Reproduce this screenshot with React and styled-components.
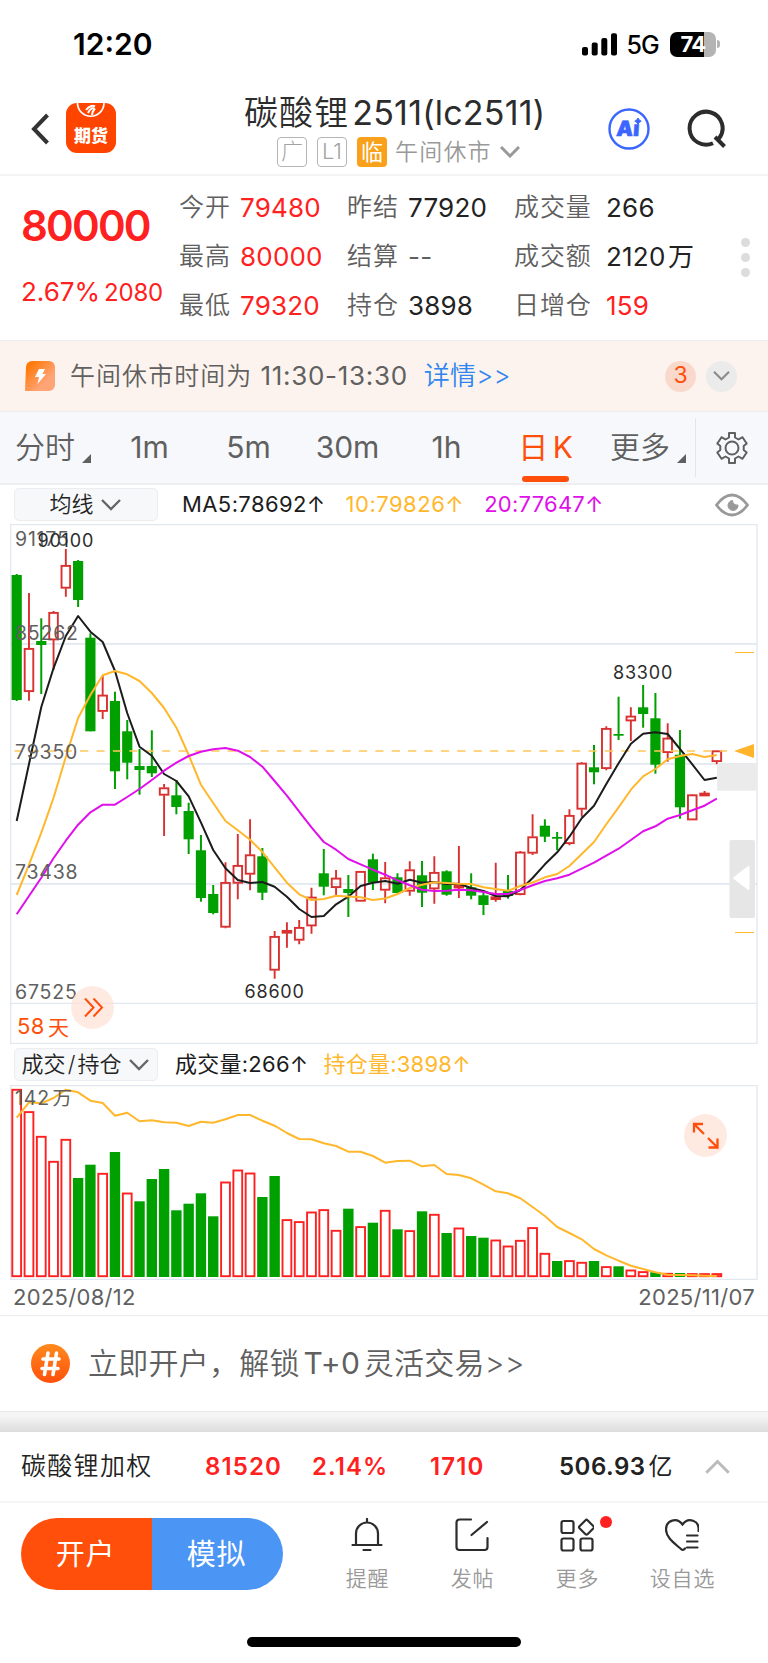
import React from 'react';
import styled, { createGlobalStyle } from 'styled-components';

const colors = {
  up: '#ff2020',
  candleUp: '#d93030',
  down: '#00a000',
  brand: '#ff4f0a',
  ma5: '#1c1c1c',
  ma10: '#ffb72c',
  ma20: '#e010ea',
  grid: '#e2e8ef',
  text: '#222222',
  label: '#606060',
  muted: '#999999',
};

const GlobalStyle = createGlobalStyle`
  * {
    box-sizing: border-box;
  }

  body {
    margin: 0;
    background: #fff;
    font-family: Inter, 'Noto Sans CJK SC', sans-serif;
    font-weight: 400;
    line-height: 1.21;
    color: ${colors.text};
  }

  svg {
    display: block;
    flex: none;
  }
`;

const Page = styled.div`
  width: 768px;
  height: 1663px;
  display: flex;
  flex-direction: column;
  overflow: hidden;
  white-space: nowrap;
`;

/* status bar */

const StatusBar = styled.div`
  height: 88px;
  padding: 0 48px 0 73px;
  display: flex;
  align-items: center;
  justify-content: space-between;
  color: #000;
`;

const Clock = styled.span`
  font-size: 30px;
  font-weight: 600;
`;

const StatusRight = styled.div`
  display: flex;
  align-items: center;
`;

const Network = styled.span`
  margin: 2px 11px 0 9px;
  font-size: 25px;
  font-weight: 500;
  letter-spacing: -0.8px;
`;

const Battery = styled.div`
  width: 46px;
  height: 25px;
  border-radius: 7px;
  background: linear-gradient(90deg, #000 0 34px, #b4b4b4 34px);
  color: #fff;
  font-size: 22px;
  font-weight: 700;
  line-height: 25px;
  text-align: center;
  letter-spacing: -0.8px;
`;

const BatteryTip = styled.span`
  width: 3px;
  height: 8px;
  margin-left: 1px;
  border-radius: 0 3px 3px 0;
  background: #b4b4b4;
`;

/* header */

const Header = styled.header`
  height: 88px;
  padding: 0 42px 0 31px;
  display: flex;
  align-items: flex-start;
  border-bottom: 2px solid #f4f4f4;
`;

const BackIcon = styled.svg`
  margin-top: 25px;
`;

const AppLogo = styled.div`
  position: relative;
  width: 50px;
  height: 50px;
  margin: 15px 0 0 17px;
  border-radius: 11px;
  background: #ff4400;
  overflow: hidden;
  color: #fff;
  font-size: 17px;
  font-weight: 900;
  line-height: 66px;
  text-align: center;

  svg {
    position: absolute;
    top: 0;
    left: 10px;
  }
`;

const TitleBlock = styled.div`
  width: 302px;
  margin: 1px 0 0 128px;
`;

const Title = styled.h1`
  margin: 0;
  height: 48px;
  display: flex;
  align-items: center;
  gap: 3px;
  font-size: 34px;
  line-height: 46px;
  font-weight: 400;
  color: #2c2c2c;
`;

const TitleName = styled.span`
  font-weight: 350;
  letter-spacing: 1.1px;
`;

const TitleCode = styled.span`
  letter-spacing: 0.2px;
`;

const TagRow = styled.div`
  display: flex;
  align-items: center;
  margin-left: 33px;
`;

const Tag = styled.span`
  width: 30px;
  height: 30px;
  margin-right: ${({ $filled }) => ($filled ? 8 : 10)}px;
  border-radius: 4px;
  border: ${({ $filled }) => ($filled ? 'none' : '1.5px solid #b5b5b5')};
  background: ${({ $filled }) => ($filled ? '#f9a11b' : '#fff')};
  color: ${({ $filled }) => ($filled ? '#fff' : '#a3a3a3')};
  font-size: 22px;
  line-height: ${({ $filled }) => ($filled ? 30 : 27)}px;
  text-align: center;
  font-weight: ${({ $filled }) => ($filled ? 400 : 300)};
`;

const Session = styled.span`
  margin-right: 8px;
  font-size: 23px;
  line-height: 30px;
  letter-spacing: 1.2px;
  font-weight: 350;
  color: ${colors.muted};
`;

const AiIcon = styled.svg`
  margin: 20px 37px 0 62px;
`;

const SearchIcon = styled.svg`
  margin-top: 21px;
`;

/* quote */

const Quote = styled.section`
  height: 165px;
  display: flex;
  padding: 7px 18px 0 21px;
  border-bottom: 1px solid #ececec;
`;

const PriceBlock = styled.div`
  width: 158px;
  color: ${colors.up};
`;

const Price = styled.div`
  margin-top: 12px;
  font-size: 42px;
  line-height: 62px;
  font-weight: 600;
  letter-spacing: -1.8px;
`;

const Change = styled.div`
  margin-top: 19px;
  display: flex;
  align-items: baseline;
  gap: 4px;
  font-size: 26px;
  line-height: 32px;

  span:last-child {
    font-size: 24px;
    letter-spacing: -0.2px;
  }
`;

const StatColumn = styled.div`
  width: ${({ $width }) => $width}px;
`;

const Stat = styled.div`
  height: 49px;
  display: flex;
  align-items: center;
`;

const StatLabel = styled.span`
  width: ${({ $width }) => $width}px;
  font-size: 25px;
  letter-spacing: 0.9px;
  font-weight: 350;
  color: ${colors.label};
`;

const StatValue = styled.span`
  font-size: 26px;
  letter-spacing: 0.2px;
  word-spacing: -5px;
  color: ${({ $color }) => $color || '#222'};
`;

const Dots = styled.div`
  margin: 55px 0 0 auto;
  display: flex;
  flex-direction: column;
  gap: 6px;

  i {
    width: 9px;
    height: 9px;
    border-radius: 50%;
    background: #dcdcdc;
  }
`;

/* notice */

const Notice = styled.section`
  height: 71px;
  padding: 0 31px 0 25px;
  display: flex;
  align-items: center;
  background: #fdf3ee;
  border-bottom: 1px solid #ededed;
`;

const NoticeText = styled.span`
  margin: 0 16px 0 14px;
  font-size: 25px;
  letter-spacing: 1.05px;
  font-weight: 350;
  color: ${colors.label};

  b {
    font-weight: 400;
    font-size: 26px;
    letter-spacing: 0.7px;
  }
`;

const NoticeLink = styled.a`
  margin-right: auto;
  font-size: 26px;
  font-weight: 350;
  letter-spacing: 0.2px;
  color: #2f86ee;
`;

const Round = styled.span`
  width: 31px;
  height: 31px;
  margin-left: 10px;
  border-radius: 50%;
  display: flex;
  align-items: center;
  justify-content: center;
  background: ${({ $bg }) => $bg};
  color: ${colors.brand};
  font-size: 23px;
`;

/* period tabs */

const Tabs = styled.nav`
  height: 73px;
  display: flex;
  align-items: stretch;
  background: #f6f8fb;
  border-bottom: 2px solid #efeff2;
`;

const Tab = styled.div`
  position: relative;
  width: ${({ $menu }) => ($menu ? 100 : 99)}px;
  padding-left: ${({ $menu }) => ($menu ? 15 : 0)}px;
  display: flex;
  align-items: center;
  justify-content: ${({ $menu }) => ($menu ? 'flex-start' : 'center')};
  font-size: 30px;
  word-spacing: -4px;
  color: ${({ $active }) => ($active ? colors.brand : colors.label)};
  font-weight: ${({ $menu }) => ($menu ? 350 : 400)};

  &::after {
    content: '';
    display: ${({ $active }) => ($active ? 'block' : 'none')};
    position: absolute;
    left: 26px;
    bottom: 1px;
    width: 47px;
    height: 6px;
    border-radius: 3px;
    background: ${colors.brand};
  }
`;

const Corner = styled.i`
  align-self: flex-end;
  margin: 0 0 20px 7px;
  border-style: solid;
  border-width: 0 0 9px 9px;
  border-color: transparent transparent #606060 transparent;
`;

const Settings = styled.div`
  flex: 1;
  margin: 6px 0;
  padding-left: 19px;
  display: flex;
  align-items: center;
  border-left: 1px solid #e6e6ea;
`;

/* indicators */

const Legend = styled.div`
  height: ${({ $height }) => $height}px;
  padding: 0 19px 0 14px;
  display: flex;
  align-items: center;
  font-size: 22px;
`;

const Select = styled.div`
  width: 144px;
  height: 33px;
  padding-right: 2px;
  border-radius: 5px;
  border: 1px solid #ecedf0;
  background: #f6f8fa;
  display: flex;
  align-items: center;
  justify-content: center;
  gap: 7px;
  font-size: 22px;
  font-weight: 350;
  word-spacing: -4px;
`;

const LegendItem = styled.span`
  margin-left: ${({ $gap }) => $gap}px;
  color: ${({ $color }) => $color};
  letter-spacing: ${({ $spacing }) => $spacing ?? 0.4}px;
`;

const EyeIcon = styled.svg`
  margin-left: auto;
`;

/* charts */

const ChartBox = styled.div`
  position: relative;
`;

const FloatButton = styled.button`
  position: absolute;
  left: ${({ $left }) => $left}px;
  top: ${({ $top }) => $top}px;
  width: 43px;
  height: 43px;
  padding: 0;
  border: 0;
  border-radius: 50%;
  background: rgba(255, 225, 214, 0.7);
`;

const ChartText = styled.text`
  font-size: ${({ $size }) => $size || 19.5}px;
  letter-spacing: ${({ $spacing }) => $spacing ?? 0.8}px;
  fill: ${({ $color }) => $color || colors.label};
`;

const Dates = styled.div`
  height: 36px;
  padding: 0 13px;
  display: flex;
  align-items: center;
  justify-content: space-between;
  border-bottom: 1px solid #ececec;
  font-size: 22px;
  letter-spacing: 0.3px;
  color: ${colors.label};
`;

/* promo */

const Promo = styled.section`
  height: 95px;
  padding-left: 31px;
  display: flex;
  align-items: center;
  gap: 18px;
  font-size: 30px;
  font-weight: 350;
  letter-spacing: 0.25px;
  word-spacing: -5px;
  color: ${colors.label};

  b {
    font-weight: 400;
  }
`;

const Divider = styled.div`
  height: 21px;
  border-top: 1px solid #e9e9e9;
  background: linear-gradient(180deg, #f5f5f5 20%, #dcdcdc);
`;

/* index row */

const IndexRow = styled.section`
  height: 71px;
  padding-left: 21px;
  display: flex;
  align-items: center;
  border-bottom: 2px solid #f6f6f6;
`;

const IndexName = styled.span`
  width: 184px;
  font-size: 25px;
  letter-spacing: 1.3px;
  font-weight: 350;
`;

const IndexValue = styled.span`
  width: ${({ $width }) => $width}px;
  font-size: 24px;
  font-weight: 600;
  letter-spacing: ${({ $up }) => ($up ? 1.1 : 0.5)}px;
  color: ${({ $up }) => ($up ? colors.up : colors.text)};

  small {
    font-size: 24px;
    font-weight: 400;
    margin-left: 3px;
  }
`;

/* bottom bar */

const BottomBar = styled.footer`
  height: 132px;
  padding: 15px 0 0 21px;
  display: flex;
  align-items: flex-start;
`;

const TradeButtons = styled.div`
  width: 262px;
  height: 72px;
  margin-right: 32px;
  display: flex;
  border-radius: 36px;
  overflow: hidden;
`;

const TradeButton = styled.div`
  flex: 1;
  padding: 1px 2px 0 0;
  display: flex;
  align-items: center;
  justify-content: center;
  background: ${({ $color }) => $color};
  color: #fff;
  font-size: 29px;
  letter-spacing: 0.8px;
`;

const NavItem = styled.div`
  position: relative;
  width: 105px;
  display: flex;
  flex-direction: column;
  align-items: center;
  font-size: 21px;
  line-height: 30px;
  letter-spacing: 0.8px;
  font-weight: 350;
  color: ${colors.muted};

  svg {
    margin: 0 1px 10px 0;
  }
`;

const RedDot = styled.i`
  position: absolute;
  left: 75px;
  top: -2px;
  width: 12px;
  height: 12px;
  border-radius: 50%;
  background: #ff2020;
`;

const HomeIndicator = styled.div`
  width: 274px;
  height: 10px;
  margin: 2px auto 0;
  border-radius: 5px;
  background: #000;
`;

// u = rising day, d = falling day: [type, high, body top, body bottom, low]
const candles = [
  ['d', 574, 575, 700, 701], ['u', 593, 648.3, 691.7, 700.7], ['d', 618.3, 641, 645, 694],
  ['u', 611, 612.3, 640, 670], ['u', 549, 565.3, 588.3, 596.7], ['d', 560, 561, 600, 607],
  ['d', 633.3, 637.7, 731.3, 731.3], ['u', 675.7, 695, 711.5, 719], ['d', 691.7, 701, 771.3, 789],
  ['d', 720, 731.3, 762.7, 779.3], ['d', 749, 766, 770, 794.7], ['d', 730.3, 766, 773.3, 777],
  ['u', 784, 787.7, 795.3, 836], ['d', 780, 795.3, 807, 814.3], ['d', 802.7, 811, 839.3, 854],
  ['d', 835, 850.3, 898, 901.7], ['d', 885, 894, 913, 914.3], ['u', 862.3, 882.3, 927.3, 928.3],
  ['u', 834, 865.3, 883.3, 899.3], ['u', 819.3, 854.7, 874.3, 890.3], ['d', 848, 856.3, 892.7, 900],
  ['u', 931, 936.3, 970.3, 978.7], ['u', 922.3, 930.3, 933.3, 947.7], ['u', 920, 927.3, 940.3, 944.3],
  ['u', 887.7, 897, 926, 933.7], ['d', 849, 873.3, 886.7, 895.3], ['u', 870, 878, 887.7, 896.7],
  ['d', 875, 889, 893, 917], ['u', 871, 871.3, 901.3, 901.6], ['d', 853.7, 859.3, 882.7, 890],
  ['u', 862, 877.7, 890.3, 903.3], ['d', 873.3, 877.3, 893, 893], ['u', 861.3, 869.7, 891.3, 895.7],
  ['d', 861, 875.3, 892.7, 907], ['u', 856.3, 872.3, 889, 903.7], ['d', 870.3, 871.3, 894.7, 895.7],
  ['u', 846, 885.3, 887.3, 898], ['d', 873.3, 887.3, 895.7, 899.3], ['d', 891, 895.3, 905, 915],
  ['u', 862.7, 896.7, 899.7, 901.7], ['d', 875, 891, 896, 898.7], ['u', 851, 852, 894.7, 895.3],
  ['u', 814.3, 836.7, 853.3, 855], ['d', 819.3, 825.7, 836.7, 842], ['d', 832, 837, 838.7, 850.3],
  ['u', 809.3, 815.3, 843.7, 845.3], ['u', 762.3, 763, 809.3, 816.7], ['d', 745, 767.3, 772.3, 784.3],
  ['u', 726.3, 728.3, 768.7, 770.3], ['d', 696.7, 734, 735.7, 740], ['u', 707.3, 716, 721, 741],
  ['d', 685, 707.3, 714, 727.7], ['d', 693, 718.3, 764.7, 773.7], ['u', 723.3, 738, 752.7, 761.7],
  ['d', 730, 754.7, 807.3, 818.7], ['u', 794.3, 794.7, 820, 820], ['u', 791, 793, 796, 796],
  ['u', 750.4, 750.7, 761.7, 764.3],
];

const ma5 = [
  821, 764, 707, 668.3, 636, 616, 631.7, 642, 671, 713, 746.7, 755.7, 774, 781, 796.3, 822.3, 850, 868.3, 880, 883,
  882, 886.7, 896.7, 909, 917, 916, 904.3, 896.7, 886, 882.7, 881, 883.7, 879.7, 882.7, 882, 884, 883.7, 888, 891, 896,
  896.3, 890, 878, 864.3, 852.3, 836.7, 818.3, 805.7, 784, 763.3, 743.7, 733.7, 732.3, 734, 749, 764.3, 780, 777.7,
];

const ma10 = [
  895, 864.7, 832.7, 798, 757, 718, 695, 675.3, 671, 674.3, 681, 693, 708, 727.7, 755, 784.7, 803, 821, 830.3, 839.7,
  852, 867.3, 882.7, 894.3, 900, 899, 895.7, 896.5, 897.3, 900, 898.5, 894, 888, 884.7, 882.3, 883, 883.7, 884, 887.3,
  889, 890.7, 886, 882.5, 877.3, 874, 866, 854, 842, 824.3, 807.3, 789.7, 776.3, 769, 759.3, 756, 754, 757, 755,
];

const ma20 = [
  914.3, 896, 877.7, 858.3, 840.7, 824.7, 812.3, 804.7, 804.7, 797, 789, 780, 770.7, 762.7, 756, 751.7, 749.3, 748,
  750.7, 757, 766.7, 781, 795.7, 811.7, 827.3, 842, 849.7, 859, 864.3, 869.7, 874.7, 880.3, 885.3, 889.7, 891, 890.7,
  889.7, 890.3, 892, 894, 894, 890, 885.3, 881, 878.3, 874.7, 868.7, 862.7, 855.7, 848.7, 840, 831.3, 826.3, 818.7,
  815, 810.3, 805.7, 798.7,
];

// bar heights, the sign carries the direction
const volumes = [
  188, 165.7, 141, 116, 138, -99, -112.3, 104, -125, 84.3, -75.7, -98, -108, -66.7, -73.3, -83.7, -60.7, 95.3, 107.3,
  104.3, -80, -101, 57.7, 55.7, 65.3, 67.7, 47, -68.3, 50.7, -54.3, 67, -47.7, 46.7, -65.7, 63, -44, 49.3, -41, -39.3,
  37.3, 31.3, 37, 49.7, 24, -16, 16.7, 15, -16, 10.7, -10.7, 7.3, 5.7, -4.7, 4, -4, 3.7, 3.7, 3.7,
];

const openInterest = [
  1117.7, 1102.3, 1103.3, 1098, 1089.7, 1092.3, 1100.7, 1103, 1115.7, 1112.7, 1121.3, 1120.3, 1122.3, 1122.7, 1126,
  1121.7, 1122.7, 1119.3, 1115, 1115, 1120.7, 1125.7, 1133, 1139, 1139.3, 1143.3, 1146, 1151.7, 1151.7, 1156, 1162.7,
  1161, 1160.7, 1166.3, 1165, 1174, 1175, 1178.3, 1184.7, 1191.3, 1193.3, 1198.3, 1207, 1216, 1227, 1233, 1239.3,
  1249, 1255.3, 1260.7, 1265.7, 1269, 1272.3, 1274.7, 1275, 1275.3, 1275.7, 1276,
];

const slotX = (i) => 16.7 + i * 12.283;
const toPoints = (values) => values.map((y, i) => `${slotX(i).toFixed(1)},${y}`).join(' ');

const Series = ({ values, color }) => (
  <polyline points={toPoints(values)} fill="none" stroke={color} strokeWidth="2" strokeLinejoin="round" />
);

const Chevron = ({ width = 20, height = 12, color = '#666', stroke = 2.4, up }) => (
  <svg width={width} height={height} viewBox="0 0 20 12" fill="none" stroke={color} strokeWidth={stroke}>
    <path d={up ? 'M1 11 10 2l9 9' : 'M1 1l9 9 9-9'} />
  </svg>
);

const Candle = ({ index, data }) => {
  const [type, high, top, bottom, low] = data;
  const x = slotX(index);

  if (type === 'd') {
    return (
      <g fill={colors.down}>
        <rect x={x - 1} y={high} width="2" height={low - high} />
        <rect x={x - 5.1} y={top} width="10.2" height={bottom - top} />
      </g>
    );
  }
  return (
    <g stroke={colors.candleUp} strokeWidth="1.9" fill="none">
      <path d={`M${x} ${high}V${top}M${x} ${bottom}V${low}`} />
      <rect x={x - 4.3} y={top + 0.6} width="8.6" height={Math.max(bottom - top - 1.2, 1.6)} />
    </g>
  );
};

const PriceChart = () => (
  <svg width="768" height="520" viewBox="0 524 768 520">
    <g stroke={colors.grid} fill="none">
      <path d="M10 524.7H757.5M10 1003.4H757.5M10 1043.3H757.5" strokeWidth="1.3" />
      <path d="M10 643.8H757.5M10 763.8H757.5M10 883.8H757.5" strokeWidth="1.8" />
      <path d="M10.7 524V1044M757 524V1044" strokeWidth="1.3" />
    </g>
    {candles.map((data, i) => (
      <Candle key={i} index={i} data={data} />
    ))}
    <path d="M14.5 751H727" stroke="#ffc75a" strokeWidth="1.7" strokeDasharray="8.2 8.2" />
    <Series values={ma5} color={colors.ma5} />
    <Series values={ma10} color={colors.ma10} />
    <Series values={ma20} color={colors.ma20} />
    <rect x="717" y="763.7" width="40" height="27" fill="#ebebeb" />
    <path d="M734 751L754 744V758Z" fill="#ffb42a" />
    <path d="M735 652.5H754M735 932.5H754" stroke={colors.ma10} strokeWidth="1.2" />
    <rect x="729.5" y="840" width="25.5" height="78" rx="2" fill="#e6e6e6" />
    <path d="M734 878L748.5 867V889Z" fill="#fff" stroke="#fff" strokeWidth="2" strokeLinejoin="round" />
    <ChartText x="15" y="545.7">91175</ChartText>
    <ChartText x="15" y="639.5">85262</ChartText>
    <ChartText x="15" y="759">79350</ChartText>
    <ChartText x="15" y="879">73438</ChartText>
    <ChartText x="15" y="998.6">67525</ChartText>
    <ChartText x="37.5" y="546.7" $size="18" $color="#2c2c2c">90100</ChartText>
    <ChartText x="613" y="678.7" $size="18" $color="#2c2c2c">83300</ChartText>
    <ChartText x="244.5" y="997.8" $size="18" $color="#2c2c2c">68600</ChartText>
    <ChartText x="17" y="1034.3" $size="22" $color={colors.brand} $spacing={0.4}>58</ChartText>
    <ChartText x="48" y="1034.5" $size="21" $color={colors.brand}>天</ChartText>
  </svg>
);

const VolumeChart = () => (
  <svg width="768" height="195" viewBox="0 1085 768 195">
    <path d="M10 1085.7H757.5M10 1279.4H757.5M10.7 1085V1280M757 1085V1280" stroke={colors.grid} strokeWidth="1.3" />
    {volumes.map((v, i) =>
      v > 0 ? (
        <rect
          key={i}
          x={slotX(i) - 4.4}
          y={1277 - v + 0.8}
          width="8.8"
          height={Math.max(v - 1.6, 1)}
          fill="#fff"
          stroke={colors.up}
          strokeWidth="1.9"
        />
      ) : (
        <rect key={i} x={slotX(i) - 5.2} y={1277 + v} width="10.4" height={-v} fill={colors.down} />
      )
    )}
    <Series values={openInterest} color={colors.ma10} />
    <ChartText x="15" y="1105.3">142</ChartText>
    <ChartText x="52.5" y="1105.3">万</ChartText>
  </svg>
);

const stats = [
  {
    width: 168,
    label: 61,
    rows: [
      ['今开', '79480', colors.up],
      ['最高', '80000', colors.up],
      ['最低', '79320', colors.up],
    ],
  },
  {
    width: 167,
    label: 61,
    rows: [
      ['昨结', '77920'],
      ['结算', '--', '#606060'],
      ['持仓', '3898'],
    ],
  },
  {
    width: 200,
    label: 92,
    rows: [
      ['成交量', '266'],
      ['成交额', '2120 万'],
      ['日增仓', '159', colors.up],
    ],
  },
];

const navItems = [
  {
    label: '提醒',
    icon: <path d="M17 1v3M6 26.500V15.500a11 11 0 0 1 22 0v11M2.500 27h29M13.500 32h7" />,
  },
  {
    label: '发帖',
    icon: <path d="M16 1.500H4.500a3 3 0 0 0-3 3v24.500a3 3 0 0 0 3 3h25a3 3 0 0 0 3-3V20M16.500 17 32 4" />,
  },
  {
    label: '更多',
    dot: true,
    icon: (
      <>
        <rect x="1.500" y="3" width="12" height="12" rx="2" />
        <rect x="1.500" y="20.500" width="12" height="12" rx="2" />
        <rect x="20.500" y="20.500" width="12" height="12" rx="2" />
        <path d="M25.500 2.200a1.500 1.500 0 0 1 2 0l6 6a1.500 1.500 0 0 1 0 2l-6 6a1.500 1.500 0 0 1-2 0l-6-6a1.500 1.500 0 0 1 0-2z" />
      </>
    ),
  },
  {
    label: '设自选',
    icon: (
      <path d="M20 30.500c-1.500 2-3 1.500-4 .5C9 25 1 19.500 1 11.500 1 2 12 -1 17.500 6.500 23-1 35 2 33.500 13M22 17.500h10.500M22 23.500h10.500M22 29.500h10.500" />
    ),
  },
];

const App = () => {
  return (
    <Page>
      <GlobalStyle />
      <StatusBar>
        <Clock>12:20</Clock>
        <StatusRight>
          <svg width="35" height="23" viewBox="0 0 35 23">
            <rect x="0" y="14" width="6" height="8.500" rx="2" />
            <rect x="9.700" y="9.500" width="6" height="13" rx="2" />
            <rect x="19.300" y="5" width="6" height="17.500" rx="2" />
            <rect x="29" y="0.300" width="6" height="22.200" rx="2" />
          </svg>
          <Network>5G</Network>
          <Battery>74</Battery>
          <BatteryTip />
        </StatusRight>
      </StatusBar>

      <Header>
        <BackIcon width="18" height="32" viewBox="0 0 18 32" fill="none" stroke="#333" strokeWidth="4">
          <path d="M16.500 2 3 16l13.500 14" />
        </BackIcon>
        <AppLogo>
          期货
          <svg width="30" height="18" viewBox="0 0 30 18" fill="none" stroke="#fff">
            <path d="M1.500 0a13 13 0 1 0 26.500 0" strokeWidth="1.700" />
            <path d="M10 7c3-4 7-5 9-3.500M12 10c1.500-3.500 4-5 6.500-5M16 12c0-3 2-5.500 3-6.500" strokeWidth="2" />
          </svg>
        </AppLogo>
        <TitleBlock>
          <Title>
            <TitleName>碳酸锂</TitleName>
            <TitleCode>2511(lc2511)</TitleCode>
          </Title>
          <TagRow>
            <Tag>广</Tag>
            <Tag>L1</Tag>
            <Tag $filled>临</Tag>
            <Session>午间休市</Session>
            <Chevron color="#999" stroke={3} />
          </TagRow>
        </TitleBlock>
        <AiIcon width="42" height="42" viewBox="0 0 42 42">
          <circle cx="21" cy="21" r="19.500" fill="none" stroke="#3a66ff" strokeWidth="2.400" />
          <text
            x="10"
            y="28"
            fontSize="21"
            fontWeight="900"
            fill="#3a66ff"
            stroke="#3a66ff"
            strokeWidth="0.600"
            transform="skewX(-4)"
          >
            Aı
          </text>
          <path d="M30 10l1.200 2 2 1.200-2 1.200-1.200 2-1.200-2-2-1.200 2-1.200z" fill="#3a66ff" stroke="#3a66ff" />
        </AiIcon>
        <SearchIcon width="39" height="39" viewBox="0 0 39 39" fill="none" stroke="#2c2c2c" strokeWidth="4">
          <path d="M26 34.200A16.500 16.500 0 1 1 32 29.500M28 28l9.500 9.500" />
        </SearchIcon>
      </Header>

      <Quote>
        <PriceBlock>
          <Price>80000</Price>
          <Change>
            <span>2.67%</span>
            <span>2080</span>
          </Change>
        </PriceBlock>
        {stats.map((column) => (
          <StatColumn key={column.rows[0][0]} $width={column.width}>
            {column.rows.map(([label, value, color]) => (
              <Stat key={label}>
                <StatLabel $width={column.label}>{label}</StatLabel>
                <StatValue $color={color}>{value}</StatValue>
              </Stat>
            ))}
          </StatColumn>
        ))}
        <Dots>
          <i />
          <i />
          <i />
        </Dots>
      </Quote>

      <Notice>
        <svg width="31" height="30" viewBox="0 0 31 30">
          <defs>
            <linearGradient id="bolt" x1="0" y1="0" x2="1" y2="1">
              <stop offset="0.150" stopColor="#ff7a08" />
              <stop offset="0.700" stopColor="#ffa477" />
            </linearGradient>
          </defs>
          <path d="M0 30L1 6a6 6 0 0 1 6-6h17a6 6 0 0 1 6 6v18a6 6 0 0 1-6 6z" fill="url(#bolt)" />
          <path d="M14 8h6l-2.500 5H21l-8.500 10 1.500-7h-4z" fill="#fff" />
        </svg>
        <NoticeText>
          午间休市时间为 <b>11:30-13:30</b>
        </NoticeText>
        <NoticeLink>详情&gt;&gt;</NoticeLink>
        <Round $bg="#f9d9cc">3</Round>
        <Round $bg="#ebebeb">
          <Chevron width={17} height={10} color="#8c8c8c" stroke={2.6} />
        </Round>
      </Notice>

      <Tabs>
        <Tab $menu>
          分时
          <Corner />
        </Tab>
        <Tab>1m</Tab>
        <Tab>5m</Tab>
        <Tab>30m</Tab>
        <Tab>1h</Tab>
        <Tab $active>日 K</Tab>
        <Tab $menu>
          更多
          <Corner />
        </Tab>
        <Settings>
          <svg width="34" height="34" viewBox="0 0 34 34" fill="none" stroke="#606060" strokeWidth="2" strokeLinejoin="round">
            <path d="M14 2h6v4.500l3.500 2 4-2.300 4.200 6.300-3 2.500v4l3 2.500-4.200 6.300-4-2.300-3.500 2V32h-6v-4.500l-3.500-2-4 2.300-4.200-6.300 3-2.500v-4l-3-2.500 4.200-6.300 4 2.300 3.500-2z" />
            <circle cx="17" cy="17" r="6.500" />
          </svg>
        </Settings>
      </Tabs>

      <Legend $height={39}>
        <Select>
          均线
          <Chevron />
        </Select>
        <LegendItem $gap={24} $color="#1c1c1c">MA5:78692↑</LegendItem>
        <LegendItem $gap={20} $color={colors.ma10} $spacing={0.5}>10:79826↑</LegendItem>
        <LegendItem $gap={20} $color={colors.ma20} $spacing={0.25}>20:77647↑</LegendItem>
        <EyeIcon width="34" height="24" viewBox="0 0 34 24">
          <path d="M1.500 12C7 4.500 12 2 17 2s10 2.500 15.500 10C27 19.500 22 22 17 22S7 19.500 1.500 12z" fill="none" stroke="#999" strokeWidth="2.800" />
          <path d="M17.500 7.500a5 5 0 1 0 5.500 4.500 4.500 4.500 0 0 1-5.500-4.500z" fill="#999" stroke="#999" />
        </EyeIcon>
      </Legend>

      <ChartBox>
        <PriceChart />
        <FloatButton $left={71} $top={462}>
          <svg width="43" height="43" viewBox="0 0 43 43" fill="none" stroke={colors.brand} strokeWidth="2">
            <path d="M14 12.500l8.500 9-8.500 9M22.500 12.500l8.500 9-8.500 9" />
          </svg>
        </FloatButton>
      </ChartBox>

      <Legend $height={41}>
        <Select>
          成交 / 持仓
          <Chevron />
        </Select>
        <LegendItem $gap={17} $color="#1c1c1c" $spacing={0.25}>成交量:266↑</LegendItem>
        <LegendItem $gap={15} $color={colors.ma10} $spacing={0.25}>持仓量:3898↑</LegendItem>
      </Legend>

      <ChartBox>
        <VolumeChart />
        <FloatButton $left={684} $top={29}>
          <svg width="43" height="43" viewBox="0 0 43 43" fill="none" stroke={colors.brand} strokeWidth="2.300">
            <path d="M10 18.500V10h9M10 10l10 10M24 24l9.500 9.500M24.500 33.500h9v-9" />
          </svg>
        </FloatButton>
      </ChartBox>

      <Dates>
        <span>2025/08/12</span>
        <span>2025/11/07</span>
      </Dates>

      <Promo>
        <svg width="39" height="39" viewBox="0 0 39 39">
          <defs>
            <linearGradient id="hash" x1="0" y1="0" x2="0" y2="1">
              <stop offset="0" stopColor="#ff8a1e" />
              <stop offset="1" stopColor="#ff4f0a" />
            </linearGradient>
          </defs>
          <circle cx="19.500" cy="19.500" r="19.500" fill="url(#hash)" />
          <path d="M17 9l-3.500 21.500M25.500 9 22 30.500M12 15h16M11 24.500h16" stroke="#fff" strokeWidth="3.600" strokeLinecap="round" />
        </svg>
        <span>
          立即开户，解锁 <b>T+0</b> 灵活交易&gt;&gt;
        </span>
      </Promo>

      <Divider />

      <IndexRow>
        <IndexName>碳酸锂加权</IndexName>
        <IndexValue $up $width={107}>81520</IndexValue>
        <IndexValue $up $width={118}>2.14%</IndexValue>
        <IndexValue $up $width={129}>1710</IndexValue>
        <IndexValue $width={146}>
          506.93<small>亿</small>
        </IndexValue>
        <Chevron width={25} height={15} color="#bbb" stroke={2.4} up />
      </IndexRow>

      <BottomBar>
        <TradeButtons>
          <TradeButton $color="#ff4f0a">开户</TradeButton>
          <TradeButton $color="#4b95f5">模拟</TradeButton>
        </TradeButtons>
        {navItems.map((item) => (
          <NavItem key={item.label}>
            <svg width="34" height="36" viewBox="0 0 34 36" fill="none" stroke="#2c2c2c" strokeWidth="2.2" strokeLinecap="round">
              {item.icon}
            </svg>
            {item.label}
            {item.dot && <RedDot />}
          </NavItem>
        ))}
      </BottomBar>

      <HomeIndicator />
    </Page>
  );
};

export default App;
